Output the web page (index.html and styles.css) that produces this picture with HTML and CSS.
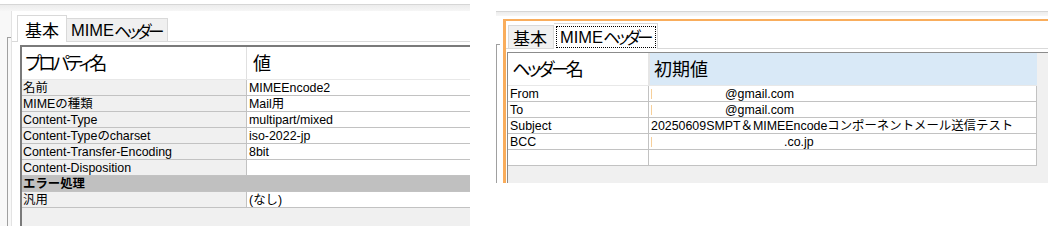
FILE: index.html
```html
<!DOCTYPE html>
<html lang="ja">
<head>
<meta charset="utf-8">
<title>MIME Encode properties</title>
<link rel="stylesheet" href="styles.css">
</head>
<body>
<div class="screens">
  <section class="shot shot-left">
    <div class="topband"></div>
    <div class="frame">
      <div class="gutter"><div class="gutter-line"></div></div>
      <div class="tabctl">
        <div class="tabs">
          <div class="tab active t-basic">基本</div>
          <div class="tab t-mime">MIME<span class="kana">ヘッダー</span></div>
        </div>
        <div class="page">
          <div class="grid">
            <div class="row head">
              <div class="cell name">プロパティ名</div>
              <div class="cell value">値</div>
            </div>
            <div class="row"><div class="cell name">名前</div><div class="cell value">MIMEEncode2</div></div>
            <div class="row"><div class="cell name">MIMEの種類</div><div class="cell value">Mail用</div></div>
            <div class="row"><div class="cell name">Content-Type</div><div class="cell value">multipart/mixed</div></div>
            <div class="row"><div class="cell name">Content-Typeのcharset</div><div class="cell value">iso-2022-jp</div></div>
            <div class="row"><div class="cell name">Content-Transfer-Encoding</div><div class="cell value">8bit</div></div>
            <div class="row"><div class="cell name">Content-Disposition</div><div class="cell value"></div></div>
            <div class="row section">エラー処理</div>
            <div class="row"><div class="cell name">汎用</div><div class="cell value">(なし)</div></div>
          </div>
        </div>
      </div>
    </div>
  </section>

  <section class="shot shot-right">
    <div class="topband"></div>
    <div class="frame">
      <div class="gutter"><div class="gutter-line"></div></div>
      <div class="sel">
        <div class="tabctl">
          <div class="tabs">
            <div class="tab t-basic">基本</div>
            <div class="tab active t-mime"><span class="focus">MIME<span class="kana">ヘッダー</span></span></div>
          </div>
          <div class="page">
            <div class="grid">
              <div class="row head">
                <div class="cell name">ヘッダー名</div>
                <div class="cell value">初期値</div>
              </div>
              <div class="row"><div class="cell name">From</div><div class="cell value"><span class="mark"></span><span class="redact r-mail"></span>@gmail.com</div></div>
              <div class="row"><div class="cell name">To</div><div class="cell value"><span class="mark"></span><span class="redact r-mail"></span>@gmail.com</div></div>
              <div class="row"><div class="cell name">Subject</div><div class="cell value">20250609SMPT＆MIMEEncodeコンポーネントメール送信テスト</div></div>
              <div class="row"><div class="cell name">BCC</div><div class="cell value"><span class="mark"></span><span class="redact r-domain"></span>.co.jp</div></div>
              <div class="row"><div class="cell name"></div><div class="cell value"></div></div>
            </div>
          </div>
        </div>
      </div>
    </div>
  </section>
</div>
</body>
</html>
```

FILE: styles.css
```css
* { box-sizing: border-box; }

body {
  margin: 0;
  background: #fff;
  font-family: "Liberation Sans", "Noto Sans CJK JP", sans-serif;
  font-size: 12.4px;
  color: #000;
}

.screens {
  display: flex;
  align-items: flex-start;
  gap: 26px;
}

.shot {
  display: flex;
  flex-direction: column;
  overflow: hidden;
  flex: none;
}
.shot-left { width: 470px; height: 226px; }
.shot-right { width: 552px; height: 172px; margin-top: 11px; }

.topband {
  flex: none;
  border-top: 1px solid #d6d6d6;
  background: linear-gradient(#ececec, #f6f6f6);
}
.shot-left .topband { margin-top: 4px; height: 7px; }
.shot-right .topband { height: 5px; margin-bottom: 3px; }

.frame {
  flex: 1;
  display: flex;
  min-height: 0;
}

.gutter { flex: none; display: flex; }
.gutter-line {
  width: 4px;
  border-left: 1px solid #a0a0a0;
  border-top: 1px solid #a0a0a0;
}
.shot-left .gutter {
  width: 12px;
  padding: 26px 0 0 7px;
  border-right: 1px solid #e3e3e3;
  background: #f8f8f8;
}
.shot-right .gutter {
  width: 7px;
  padding-top: 25px;
}

.sel {
  flex: 1;
  display: flex;
  border-top: 2px solid #f9ad5c;
  border-left: 3px solid #f9ad5c;
  min-width: 0;
}

.tabctl {
  flex: 1;
  display: flex;
  flex-direction: column;
  min-width: 0;
}
.shot-left .tabctl { padding-top: 4px; }
.shot-right .tabctl { padding-top: 2px; }

.tabs {
  flex: none;
  display: flex;
  align-items: flex-end;
}
.shot-left .tabs { margin-left: 5px; height: 27px; }
.shot-right .tabs { margin-left: 2px; height: 26px; }

.tab {
  display: flex;
  align-items: center;
  white-space: nowrap;
  font-size: 17px;
  background: #f0f0f0;
  border: 1px solid #d9d9d9;
  border-bottom: none;
  font-feature-settings: "palt";
  overflow: hidden;
}
.tab.active {
  background: #fff;
  position: relative;
  z-index: 1;
}
.t-mime { font-size: 16.5px; }
.kana { letter-spacing: -3.6px; }

.shot-left .t-basic { width: 50px; height: 27px; padding-left: 7px; }
.shot-left .t-mime { width: 101px; height: 24px; padding-left: 4px; border-left: none; }

.shot-right .t-basic { width: 46px; height: 24px; padding-left: 4px; }
.shot-right .t-mime {
  width: 104px;
  height: 26px;
  border-left: none;
  padding: 2px 1px 1px 2px;
  align-items: stretch;
}
.focus {
  flex: 1;
  display: flex;
  align-items: center;
  padding-left: 3px;
  border: 1px dotted #000;
  overflow: hidden;
}

.page {
  flex: 1;
  display: flex;
  flex-direction: column;
  min-height: 0;
  border-top: 1px solid #d9d9d9;
  margin-top: -1px;
}
.shot-left .page { padding: 3px 0 0 8px; }
.shot-right .page { padding: 3px 0 0 1px; }

.grid {
  flex: 1;
  background: #f0f0f0;
}
.shot-left .grid {
  border-top: 2px solid #7a7a7a;
  border-left: 2px solid #7a7a7a;
}
.shot-right .grid {
  border-top: 1px solid #8c8c8c;
  border-left: 1px solid #8c8c8c;
}

.row {
  display: flex;
  height: 16px;
  border-bottom: 1px solid #c2c2c2;
  line-height: 14px;
  white-space: nowrap;
}
.cell { padding-top: 1px; overflow: hidden; }
.cell.name {
  flex: none;
  padding-left: 1px;
  border-right: 1px solid #c2c2c2;
}
.cell.value {
  padding-left: 2px;
}

.shot-left .cell.name { width: 225px; background: #f0f0f0; }
.shot-left .cell.value { flex: 1; background: #fff; }

.shot-right .row { width: 529px; }
.shot-right .cell.name { width: 141px; background: #fff; padding-left: 2px; }
.shot-right .cell.value { width: 388px; background: #fff; border-right: 1px solid #c2c2c2; }

.row.head {
  height: 33px;
  border-bottom: 1px solid #e8e8e8;
  font-feature-settings: "palt";
  font-size: 18px;
}
.row.head .cell {
  display: flex;
  align-items: center;
  padding-top: 2px;
  background: #fff;
}
.shot-left .row.head .cell.name { padding-left: 3px; border-right: 1px solid #e0e0e0; letter-spacing: -3.2px; }
.shot-left .row.head .cell.value { padding-left: 6px; }

.shot-right .row.head .cell.name { width: 142px; padding-left: 4px; border-right: 2px solid #e6e6e6; letter-spacing: -3.2px; }
.shot-right .row.head .cell.value { width: 387px; padding-left: 4px; background: #d9e9f7; border-right: none; }

.row.section {
  background: #c0c0c0;
  font-weight: bold;
  padding: 1px 0 0 1px;
}

.mark {
  display: inline-block;
  width: 1px;
  height: 10px;
  background: #f6cf9a;
  vertical-align: -1px;
}
.redact { display: inline-block; }
.r-mail { width: 73px; }
.r-domain { width: 132px; }
```
